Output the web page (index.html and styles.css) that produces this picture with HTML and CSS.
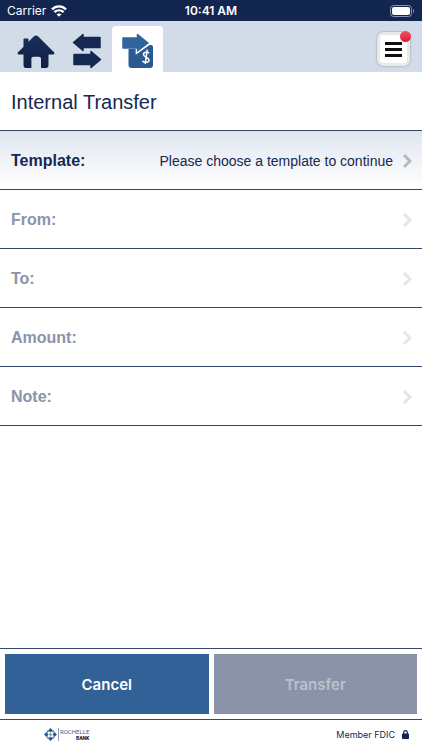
FILE: index.html
```html
<!DOCTYPE html>
<html lang="en">
<head>
  <meta charset="UTF-8">
  <meta name="viewport" content="width=device-width, initial-scale=1.0">
  <title>Internal Transfer</title>
  <link rel="stylesheet" href="styles.css">
</head>
<body>
  <div class="status-bar">
    <div class="carrier">
      <span>Carrier</span>
      <svg width="16" height="12" viewBox="0 0 16 12" fill="none" stroke="#fff" stroke-width="2.400">
        <path d="M1 4.400C5 .3 11 .3 15 4.400M3.400 7.200c2.700-2.500 6.500-2.500 9.200 0"/>
        <path d="M5.500 9.300 8 11.800l2.500-2.500c-1.400-1.200-3.600-1.200-5 0z" fill="#fff" stroke="none"/>
      </svg>
    </div>
    <time class="clock">10:41 AM</time>
    <svg class="battery" width="25" height="12" viewBox="0 0 25 12">
      <rect x=".5" y=".5" width="21" height="11" rx="3" fill="none" stroke="#8b95ad"/>
      <rect x="2" y="2" width="18" height="8" rx="2" fill="#fff"/>
      <path d="M23 4v4c1.300-.4 1.300-3.600 0-4z" fill="#8b95ad"/>
    </svg>
  </div>

  <nav class="top-nav">
    <a class="nav-home" href="#" aria-label="Home">
      <svg width="38" height="34" viewBox="0 0 38 34">
        <path d="M19 .5c.8 0 1.400.3 2 .8L37 17.200c1 1 .4 2.300-1 2.300h-4.500v11c0 1.600-.9 2.500-2.500 2.500h-5v-9c0-1.500-.8-2.300-2.300-2.300h-5c-1.500 0-2.300.8-2.300 2.300v9H9c-1.600 0-2.500-.9-2.500-2.500v-11H2c-1.400 0-2-1.300-1-2.300l5.500-5.400V4.500c0-.6.4-1 1-1h3c.6 0 1 .4 1 1v2.300L17 1.300c.6-.5 1.200-.8 2-.8z" fill="url(#navy)"/>
        <defs>
          <linearGradient id="navy" x1="0" y1="0" x2="0" y2="1">
            <stop offset="0" stop-color="#192e5c"/>
            <stop offset="1" stop-color="#112043"/>
          </linearGradient>
        </defs>
      </svg>
    </a>
    <a class="nav-transfers" href="#" aria-label="Transfers">
      <svg width="30" height="36" viewBox="0 0 30 36" fill="#152853" stroke="#152853" stroke-width="1.500" stroke-linejoin="round">
        <path d="M1.500 9.500 11 1.500v3h17v10H11v3z"/>
        <path d="M28.500 26.500 19 34.500v-3H2v-10h17v-3z"/>
      </svg>
    </a>
    <a class="nav-internal" href="#" aria-label="Internal transfer" aria-current="page">
      <svg width="33" height="36" viewBox="0 0 33 36">
        <path d="M7.500 16H16v4.500L28.500 12H30a2 2 0 0 1 2 2v18a3 3 0 0 1-3 3H10.500a3 3 0 0 1-3-3z" fill="#295b92"/>
        <path d="M2 5h14.500V1.500L27 10 16.500 18.200V15H2z" fill="#30649d" stroke="#30649d" stroke-width="1.500" stroke-linejoin="round"/>
        <path d="M15.300 16v4.500L28.800 10.800" fill="none" stroke="#fff" stroke-width="1.300"/>
        <path d="M28 20.300c-1.200-1.600-5.500-1.500-5.500 1.300 0 2.800 5.700 2.600 5.500 5.600-.2 2.700-5 2.800-6.500.8M26.200 16.500l-2 14.500" fill="none" stroke="#fff" stroke-width="1.500"/>
      </svg>
    </a>
    <button class="menu-btn" type="button" aria-label="Menu">
      <span class="menu-lines"></span>
      <span class="menu-badge"></span>
    </button>
  </nav>

  <main>
    <h1>Internal Transfer</h1>
    <div class="fields">
      <button class="field active" type="button">
        <span class="field-label">Template:</span>
        <span class="field-value">Please choose a template to continue</span>
        <svg class="chevron" width="9" height="14" viewBox="0 0 9 14"><path d="M1 1l6 6-6 6"/></svg>
      </button>
      <button class="field" type="button" disabled>
        <span class="field-label">From:</span>
        <svg class="chevron" width="9" height="14" viewBox="0 0 9 14"><path d="M1 1l6 6-6 6"/></svg>
      </button>
      <button class="field" type="button" disabled>
        <span class="field-label">To:</span>
        <svg class="chevron" width="9" height="14" viewBox="0 0 9 14"><path d="M1 1l6 6-6 6"/></svg>
      </button>
      <button class="field" type="button" disabled>
        <span class="field-label">Amount:</span>
        <svg class="chevron" width="9" height="14" viewBox="0 0 9 14"><path d="M1 1l6 6-6 6"/></svg>
      </button>
      <button class="field" type="button" disabled>
        <span class="field-label">Note:</span>
        <svg class="chevron" width="9" height="14" viewBox="0 0 9 14"><path d="M1 1l6 6-6 6"/></svg>
      </button>
    </div>
  </main>

  <div class="actions">
    <button class="btn btn-cancel" type="button">Cancel</button>
    <button class="btn btn-transfer" type="button" disabled>Transfer</button>
  </div>

  <footer>
    <div class="brand">
      <svg width="13" height="13" viewBox="0 0 13 13">
        <path d="M6.500 0 9 2.500 6.500 4.500 4 2.500zM10.500 4 13 6.500 10.500 9 8.500 6.500zM6.500 8.500 9 10.500 6.500 13 4 10.500zM2.500 4l2 2.500-2 2.500L0 6.500z" fill="#2b5a92"/>
        <path d="M2.800 4.300l1.700-1.700M10.200 4.300 8.500 2.600M2.800 8.700l1.700 1.700M10.200 8.700l-1.700 1.700" stroke="#5289b5" stroke-width="1.500"/>
        <circle cx="6.500" cy="6.500" r="1.300" fill="#58a45c"/>
      </svg>
      <div class="brand-name">
        <span>ROCHELLE</span>
        <strong>BANK</strong>
      </div>
    </div>
    <div class="fdic">
      <span>Member FDIC</span>
      <svg width="7" height="9" viewBox="0 0 7 9">
        <path d="M1.700 4V2.500a1.800 1.800 0 0 1 3.600 0V4" fill="none" stroke="#13244d" stroke-width="1.200"/>
        <rect y="3.500" width="7" height="5.500" rx=".7" fill="#13244d"/>
      </svg>
    </div>
  </footer>
</body>
</html>
```
FILE: styles.css
```css
:root {
  --navy: #152852;
  --line: #35476b;
  --bar: #d1dce8;
  --blue: #316196;
  --muted: #8a93a8;
}
* { box-sizing: border-box; margin: 0; padding: 0; }
body {
  font-family: "Liberation Sans", Arial, sans-serif;
  background: #fff;
  color: var(--navy);
  min-height: 100vh;
  display: flex;
  flex-direction: column;
}
button {
  font-family: inherit;
  color: inherit;
  border: none;
  cursor: pointer;
}
button:disabled {
  cursor: default;
}
svg {
  display: block;
  flex-shrink: 0;
}

.status-bar {
  display: grid;
  grid-template-columns: 1fr auto 1fr;
  align-items: center;
  height: 21px;
  padding: 0 7px;
  background: #13264f;
  color: #fff;
  font-family: Inter, sans-serif;
  font-size: 12px;
}
.carrier {
  display: flex;
  align-items: center;
  gap: 5px;
}
.clock {
  font-weight: 600;
}
.battery {
  justify-self: end;
}

.top-nav {
  display: flex;
  align-items: flex-end;
  height: 51px;
  padding: 0 12px 0 17px;
  background: var(--bar);
}
.nav-home {
  padding-bottom: 3px;
}
.nav-transfers {
  padding: 0 10px 3px 17px;
}
.nav-internal {
  display: flex;
  justify-content: center;
  width: 51px;
  height: 46px;
  padding-top: 7px;
  background: #fff;
  border-radius: 4px 4px 0 0;
}
.menu-btn {
  position: relative;
  display: flex;
  align-items: center;
  justify-content: center;
  width: 33px;
  height: 34px;
  margin: 0 0 6px auto;
  background: #fff;
  border: 3px solid #e9e9ea;
  border-radius: 6px;
  box-shadow: 0 0 2px #7e858d;
}
.menu-lines {
  width: 17px;
  height: 15px;
  border-top: 3px solid #111;
  border-bottom: 3px solid #111;
  background: linear-gradient(#111, #111) center / 100% 3px no-repeat;
}
.menu-badge {
  position: absolute;
  top: -4px;
  right: -4px;
  width: 11px;
  height: 11px;
  border-radius: 50%;
  background: linear-gradient(#ee5261, #d91c35);
}

main {
  flex: 1;
}
h1 {
  padding: 18px 11px 16px;
  font-size: 20px;
  font-weight: normal;
  line-height: 24px;
}
.fields {
  border-top: 1px solid var(--line);
}
.field {
  display: flex;
  align-items: center;
  width: 100%;
  height: 59px;
  padding: 1px 10px 0 11px;
  background: #fff;
  border-bottom: 1px solid var(--line);
}
.field.active {
  background: linear-gradient(#e0e6f0, #fff);
}
.field-label {
  margin-right: auto;
  font-size: 16px;
  line-height: 20px;
  font-weight: bold;
}
.field-value {
  margin-right: 10px;
  font-size: 14px;
  line-height: 20px;
}
.chevron {
  fill: none;
  stroke: #b8b9bd;
  stroke-width: 3;
}
.field:disabled .field-label {
  color: var(--muted);
}
.field:disabled .chevron {
  stroke: #e6e6e8;
}

.actions {
  display: flex;
  gap: 5px;
  padding: 5px;
  border-top: 1px solid var(--line);
  border-bottom: 1px solid var(--line);
}
.btn {
  flex: 1;
  height: 60px;
  font-family: Inter, sans-serif;
  font-size: 15px;
  font-weight: 600;
}
.btn-cancel {
  background: var(--blue);
  color: #fff;
}
.btn-transfer {
  background: var(--muted);
  color: #bbc1ce;
}

footer {
  display: flex;
  align-items: center;
  justify-content: space-between;
  height: 30px;
  padding: 0 13px 2px 44px;
}
.brand {
  display: flex;
  align-items: center;
  gap: 1px;
}
.brand-name {
  display: flex;
  flex-direction: column;
  padding-left: 1px;
  border-left: 1px solid #8ca0b8;
  font-family: Roboto, sans-serif;
  font-size: 6px;
  line-height: 7px;
  color: #3b638f;
}
.brand-name strong {
  align-self: flex-end;
  font-size: 5px;
  line-height: 6px;
  font-weight: 900;
  color: var(--navy);
}
.fdic {
  display: flex;
  align-items: center;
  gap: 7px;
  font-family: Inter, sans-serif;
  font-size: 9px;
}
```
